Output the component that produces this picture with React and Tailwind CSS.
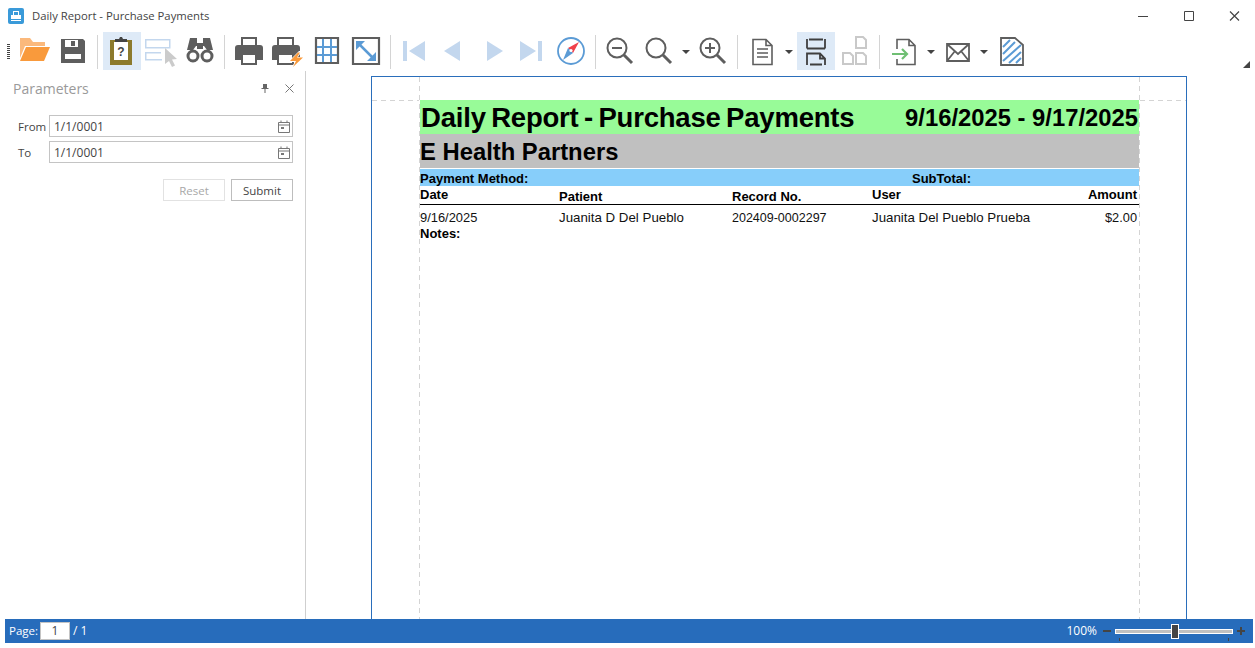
// Report viewer window: title bar, toolbar, parameters panel, report page, status bar
const UI = "font-['Open_Sans','Noto_Sans',sans-serif]"
const DARK = '#5e5e5e'
const BLUE = '#5b9bd5'
const PALE = '#c3d7ee'

const Ico = ({ children }) => (
  <svg width="38" height="38" viewBox="0 0 38 38">{children}</svg>
)

const Caret = () => (
  <svg width="10" height="38" viewBox="0 0 10 38"><path d="M1 18h8l-4 4z" fill="#444" /></svg>
)

const Sep = ({ className }) => <div className={`w-px h-[34px] bg-[#d4d4d4] self-center ${className}`} />

const icons = {
  open: <><path d="M5 6h10l3 4h12v4H10L5 26z" fill="#fbb97c" /><path d="M11 15h24l-6 14H5z" fill="#f99a3c" /></>,
  save: <><path d="M8 7h22l2 2v22H8z" fill={DARK} /><path d="M12 8h13v7H12zM12 22h16v5H12z" fill="#fff" /><path d="M18 9h4v5h-4z" fill={DARK} /></>,
  params: <><path d="M7 8h22v25H7z" fill="#8c7a2c" /><rect x="11" y="10" width="14" height="18" fill="#fff" /><path d="M12 10V7h4l1-2h2l1 2h4v3z" fill="#444" /><text x="18" y="24" textAnchor="middle" fontSize="12" fontWeight="700" fontFamily="Liberation Sans" fill="#444">?</text></>,
  tree: <><path d="M4.750 7.750h24v8h-24zM20 20.750H4.750v7H21" fill="none" stroke={PALE} strokeWidth="1.500" /><path d="M24 16l12 11-5 .5 3 6-3 1.500-3-6-4 3z" fill="#cbcbcb" /></>,
  find: <><path d="M9 6h7v8h-1l-3 4H6zM22 6h7l3 12h-6l-3-4h-1zM16 11h6v6h-6z" fill={DARK} /><circle cx="12" cy="24" r="5" fill="#fff" stroke={DARK} strokeWidth="3" /><circle cx="26" cy="24" r="5" fill="#fff" stroke={DARK} strokeWidth="3" /></>,
  print: <><path d="M12 14V6h14v8" fill="none" stroke={DARK} strokeWidth="2" /><path d="M8 13h22q3 0 3 3v12H5V16q0-3 3-3z" fill={DARK} /><path d="M12 22h14v10H12z" fill="#fff" stroke={DARK} strokeWidth="2" /></>,
  printFast: <><path d="M9 14V6h15v8" fill="none" stroke={DARK} strokeWidth="2" /><path d="M6 13h22q3 0 3 3v12H3V16q0-3 3-3z" fill={DARK} /><path d="M9 22h15v10H9z" fill="#fff" stroke={DARK} strokeWidth="2" /><path d="M30 19l-11 11h7l-4 6 14-11h-7l4-6z" fill="#fff" /><path d="M29 20.500l-8 8.500h6l-3 6 10-9.500h-6l3-5z" fill="#f99a3c" /></>,
  grid: <><path d="M8 6h22v25H8z" fill="none" stroke={DARK} strokeWidth="2.200" /><path d="M15 7v23M23 7v23M9 15h20M9 23h20" stroke={BLUE} strokeWidth="2" /></>,
  fit: <><path d="M6 6h26v26H6z" fill="none" stroke={DARK} strokeWidth="2.200" /><path d="M13 13l12 12" stroke={BLUE} strokeWidth="2.500" /><path d="M9 9h9l-9 9zM29 29h-9l9-9z" fill={BLUE} /></>,
  first: <path d="M8 9h4v20H8zM14 19l16-10v20z" fill={PALE} />,
  prev: <path d="M11 19l16-10v20z" fill={PALE} />,
  next: <path d="M28 19l-16-10v20z" fill={PALE} />,
  last: <path d="M30 9h-4v20h4zM24 19L8 9v20z" fill={PALE} />,
  compass: <><circle cx="19" cy="19" r="13" fill="#fff" stroke={BLUE} strokeWidth="1.800" /><path d="M27 10l-11 6 5 5z" fill="#f0404a" /><path d="M11 28l5-12 5 5z" fill={BLUE} /><circle cx="19" cy="18.500" r="1.600" fill="#fff" /></>,
  zoomOut: <><circle cx="16" cy="16" r="9.500" fill="none" stroke={DARK} strokeWidth="2" /><path d="M11 16h10" stroke={DARK} strokeWidth="2" /><path d="M23 23l8 8" stroke={DARK} strokeWidth="3" /></>,
  zoom: <><circle cx="16" cy="16" r="9.500" fill="none" stroke={DARK} strokeWidth="2" /><path d="M23 23l8 8" stroke={DARK} strokeWidth="3" /></>,
  zoomIn: <><circle cx="16" cy="16" r="9.500" fill="none" stroke={DARK} strokeWidth="2" /><path d="M11 16h10M16 11v10" stroke={DARK} strokeWidth="2" /><path d="M23 23l8 8" stroke={DARK} strokeWidth="3" /></>,
  page: <path d="M10 7.500h13l6 6v19H10zM23 7.500v6h6M14 17h11M14 21h11M14 25h11" fill="none" stroke={DARK} strokeWidth="1.600" />,
  continuous: <path d="M10 7v9.500M28 7v9.500M12 7.500h14M10 16.500h18M10 33V21.500h13l5 5V33M23 21.500v5h5M13 32.500h12" fill="none" stroke="#3f3f3f" strokeWidth="1.800" />,
  facing: <path d="M21 5h7l3 3v8H21zM8 21h7l3 3v8H8zM21 21h7l3 3v8H21z" fill="none" stroke="#c9c9c9" strokeWidth="2" />,
  exportDoc: <><path d="M11 17V7.500h12l6 6v19H11V27M23 7.500v6h6" fill="none" stroke={DARK} strokeWidth="1.600" /><path d="M6 22h15M16 17l5 5-5 5" fill="none" stroke="#6fbf73" strokeWidth="2.200" /></>,
  mail: <path d="M8 12h22v17H8zM8 12l11 10 11-10M8 29l8-10M30 29l-8-10" fill="none" stroke={DARK} strokeWidth="1.800" />,
  watermark: <><path d="M9 6h14l8 7v20H9z" fill="#fff" stroke={DARK} strokeWidth="1.800" /><path d="M11 15l7-7M11 22l12-12M11 29l18-16M17 31l12-11M24 31l5-5" stroke={BLUE} strokeWidth="2" /></>,
}

const Btn = ({ name, active, className = '' }) => (
  <div className={`w-[38px] h-[38px] shrink-0 ${active ? 'bg-[#deeaf7]' : ''} ${className}`}>
    <Ico>{icons[name]}</Ico>
  </div>
)

function Toolbar() {
  return (
    <div className="relative h-[39px] flex items-start shrink-0">
      <div className="ml-[2px] mt-[12px] w-[3px] h-[16px] bg-[repeating-linear-gradient(#444_0_1px,#fff_1px_2px)]" />
      <Btn name="open" className="ml-[5px]" />
      <Btn name="save" />
      <Sep className="ml-[6px]" />
      <Btn name="params" active className="ml-[5px]" />
      <Btn name="tree" />
      <Btn name="find" className="ml-[2px]" />
      <Sep className="ml-[5px]" />
      <Btn name="print" className="ml-[5px]" />
      <Btn name="printFast" className="ml-[1px]" />
      <Btn name="grid" className="ml-[1px]" />
      <Btn name="fit" className="ml-[1px]" />
      <Sep className="ml-[5px]" />
      <Btn name="first" className="ml-[4px]" />
      <Btn name="prev" />
      <Btn name="next" className="ml-[4px]" />
      <Btn name="last" className="ml-[-1px]" />
      <Btn name="compass" className="ml-[2px]" />
      <Sep className="ml-[5px]" />
      <Btn name="zoomOut" className="ml-[5px]" />
      <Btn name="zoom" className="ml-[1px]" />
      <div className="ml-[3px]"><Caret /></div>
      <Btn name="zoomIn" className="ml-[3px]" />
      <Sep className="ml-[5px]" />
      <Btn name="page" className="ml-[5px]" />
      <div className="ml-[3px]"><Caret /></div>
      <Btn name="continuous" active className="ml-[3px]" />
      <Btn name="facing" />
      <Sep className="ml-[6px]" />
      <Btn name="exportDoc" className="ml-[6px]" />
      <div className="ml-[2px]"><Caret /></div>
      <Btn name="mail" className="ml-[3px]" />
      <div className="ml-[2px]"><Caret /></div>
      <Btn name="watermark" className="ml-[3px]" />
      <svg className="absolute left-[1238px] top-[29px]" width="7" height="7" viewBox="0 0 7 7"><path d="M7 0v7H0z" fill="#444" /></svg>
    </div>
  )
}

const CalendarIcon = () => (
  <svg width="12" height="13" viewBox="0 0 12 13" className="shrink-0">
    <path d="M.5 2.500h11v10H.5zM.5 5h11M3 .5v2M9 .5v2" fill="none" stroke="#777" />
    <path d="M3 7h3v2H3z" fill="#777" />
  </svg>
)

const DateRow = ({ label }) => (
  <div className="flex items-center h-[22px]">
    <span className="w-[31px] pl-[13px] box-content text-[11.500px] text-[#444] whitespace-nowrap pt-[2px]">{label}</span>
    <div className="w-[244px] h-[22px] border border-[#c4c4c4] flex items-center justify-between pl-[4px] pr-[2px] text-[12px] text-[#444]">
      <span className="pt-[2px]">1/1/0001</span>
      <CalendarIcon />
    </div>
  </div>
)

function ParamsPanel() {
  return (
    <aside className={`w-[301px] shrink-0 border-r border-[#cfcfcf] ${UI}`}>
      <div className="flex items-center h-[34px] pl-[8px]">
        <span className="text-[14px] text-[#9a9a9a]">Parameters</span>
        <svg className="ml-auto" width="8" height="9" viewBox="0 0 8 9"><path d="M2 0h4v4h1.500v1H4.500v4h-1V5H.5V4H2z" fill="#666" /></svg>
        <svg className="ml-[16px] mr-[11px]" width="9" height="9" viewBox="0 0 9 9"><path d="M.5.500l8 8M8.500.500l-8 8" stroke="#777" /></svg>
      </div>
      <div className="mt-[10px] flex flex-col gap-[4px]">
        <DateRow label="From" />
        <DateRow label="To" />
      </div>
      <div className="mt-[16px] flex justify-end gap-[6px] pr-[12px]">
        <button className="w-[62px] h-[22px] border border-[#e2e2e2] text-[11.500px] text-[#a8a8a8] pt-[2px]">Reset</button>
        <button className="w-[62px] h-[22px] border border-[#bdbdbd] text-[11.500px] text-[#444] pt-[2px]">Submit</button>
      </div>
    </aside>
  )
}

function ReportPage() {
  return (
    <div className="relative ml-[65px] w-[816px] h-[543px] mt-[5px] border-t border-x border-[#2a6ebb] bg-white font-['Liberation_Sans',Arial,sans-serif] text-black overflow-hidden">
      <div className="pt-[23px] pl-[48px] pr-[47px]">
        <div className="h-[34px] bg-[#98fb98] flex items-center justify-between pl-px pr-px pt-[2px] font-bold">
          <span className="text-[27.500px] tracking-[-0.2px] [word-spacing:-2px]">Daily Report - Purchase Payments</span>
          <span className="text-[23.800px]">9/16/2025 - 9/17/2025</span>
        </div>
        <div className="h-[34px] bg-[#c0c0c0] flex items-center pt-[2px] text-[23.800px] font-bold">E Health Partners</div>
        <div className="mt-px h-[17px] bg-[#87cefa] relative flex items-center pt-[2px] text-[13px] font-bold">
          Payment Method:
          <span className="absolute left-[492px]">SubTotal:</span>
        </div>
        <div className="grid grid-cols-[139px_173px_140px_1fr] h-[19px] border-b border-black text-[13px] font-bold leading-[14px]">
          <span className="mt-[2px]">Date</span>
          <span className="mt-[4px]">Patient</span>
          <span className="mt-[4px]">Record No.</span>
          <span className="mt-[2px] flex justify-between pr-[2px]"><span>User</span><span>Amount</span></span>
        </div>
        <div className="grid grid-cols-[139px_173px_140px_1fr] mt-[6px] leading-[14px] text-[#111]">
          <span className="text-[12.900px]">9/16/2025</span>
          <span className="text-[13.300px]">Juanita D Del Pueblo</span>
          <span className="text-[12.500px]">202409-0002297</span>
          <span className="flex justify-between pr-[2px] text-[13.300px]"><span>Juanita Del Pueblo Prueba</span><span className="text-[12.800px]">$2.00</span></span>
        </div>
        <div className="mt-[2px] text-[13px] font-bold leading-[14px]">Notes:</div>
      </div>
      {/* margin guides */}
      <div className="absolute left-[47px] top-0 bottom-0 w-px bg-[repeating-linear-gradient(#d4d4d4_0_5px,transparent_5px_9px)]" />
      <div className="absolute left-[767px] top-0 bottom-0 w-px bg-[repeating-linear-gradient(#d4d4d4_0_5px,transparent_5px_9px)]" />
      <div className="absolute left-0 w-[47px] top-[23px] h-px bg-[repeating-linear-gradient(90deg,#d4d4d4_0_5px,transparent_5px_9px)]" />
      <div className="absolute left-[768px] right-0 top-[23px] h-px bg-[repeating-linear-gradient(90deg,#d4d4d4_0_5px,transparent_5px_9px)]" />
    </div>
  )
}

function StatusBar() {
  return (
    <div className={`h-[24px] shrink-0 bg-[#276cbb] flex items-center pl-[4px] pr-[8px] text-[11.500px] text-white ${UI}`}>
      <span>Page:</span>
      <div className="ml-[2px] w-[30px] h-[18px] bg-white border border-[#c4c4c4] text-[#444] text-[12px] text-center leading-[16px]">1</div>
      <span className="ml-[3px] text-[12px]">/ 1</span>
      <span className="ml-auto text-[12px]">100%</span>
      <div className="ml-[6px] w-[8px] h-[2px] bg-[#444]" />
      <div className="ml-[4px] relative w-[118px] h-[5px] bg-[#c0c0c0] border border-white">
        <div className="absolute left-[55px] top-[-6px] w-[8px] h-[15px] bg-[#444] border border-white" />
        <div className="absolute left-[3px] top-[8px] w-px h-[3px] bg-[#444]" />
        <div className="absolute right-[3px] top-[8px] w-px h-[3px] bg-[#444]" />
      </div>
      <svg className="ml-[4px]" width="8" height="8" viewBox="0 0 8 8"><path d="M0 4h8M4 0v8" stroke="#444" strokeWidth="2" /></svg>
    </div>
  )
}

export default function App() {
  return (
    <div className={`w-[1255px] h-[648px] bg-white flex flex-col pl-[5px] pr-[2px] pb-[5px] overflow-hidden ${UI}`}>
      <header className="h-[32px] shrink-0 flex items-center text-[11.300px] text-[#444]">
        <svg className="ml-[3px]" width="16" height="16" viewBox="0 0 16 16">
          <rect width="16" height="16" rx="2" fill="#3a9ad9" />
          <path d="M5 3h6v4h2v4H3V7h2z" fill="#fff" />
          <path d="M6 4h4v3H6z" fill="#3a9ad9" />
          <path d="M3 12h10v1H3z" fill="#fff" />
        </svg>
        <span className="ml-[8px]">Daily Report - Purchase Payments</span>
        <svg className="ml-auto mr-[13px]" width="102" height="12" viewBox="0 0 102 12">
          <path d="M0 6.500h10" stroke="#444" />
          <path d="M46.500 1.500h9v9h-9z" fill="none" stroke="#444" />
          <path d="M92 1.500l9 9M101 1.500l-9 9" stroke="#444" strokeWidth="1.200" />
        </svg>
      </header>
      <Toolbar />
      <main className="flex-1 flex min-h-0">
        <ParamsPanel />
        <ReportPage />
      </main>
      <StatusBar />
    </div>
  )
}
